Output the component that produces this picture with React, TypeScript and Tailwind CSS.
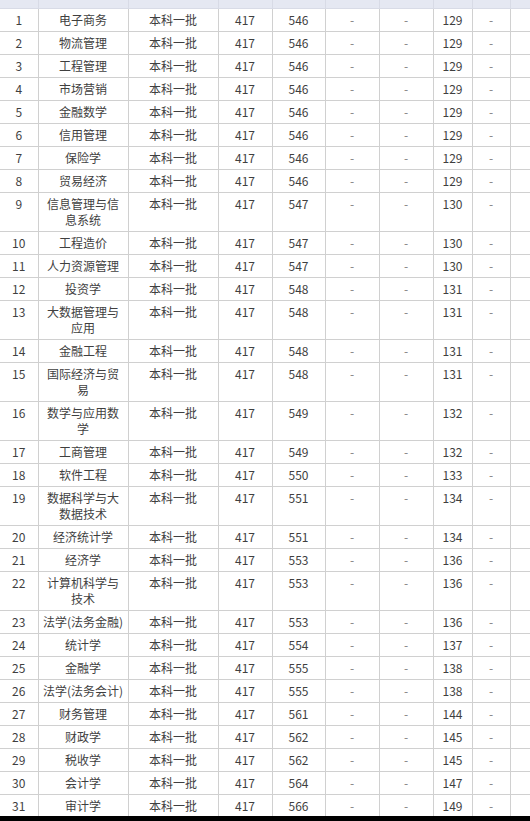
import React from 'react'

// 录取分数表（截图只露出表头底边）
type Row = [number, string, number, number]

const ROWS: Row[] = [
  [1, '电子商务', 546, 129],
  [2, '物流管理', 546, 129],
  [3, '工程管理', 546, 129],
  [4, '市场营销', 546, 129],
  [5, '金融数学', 546, 129],
  [6, '信用管理', 546, 129],
  [7, '保险学', 546, 129],
  [8, '贸易经济', 546, 129],
  [9, '信息管理与信息系统', 547, 130],
  [10, '工程造价', 547, 130],
  [11, '人力资源管理', 547, 130],
  [12, '投资学', 548, 131],
  [13, '大数据管理与应用', 548, 131],
  [14, '金融工程', 548, 131],
  [15, '国际经济与贸易', 548, 131],
  [16, '数学与应用数学', 549, 132],
  [17, '工商管理', 549, 132],
  [18, '软件工程', 550, 133],
  [19, '数据科学与大数据技术', 551, 134],
  [20, '经济统计学', 551, 134],
  [21, '经济学', 553, 136],
  [22, '计算机科学与技术', 553, 136],
  [23, '法学(法务金融)', 553, 136],
  [24, '统计学', 554, 137],
  [25, '金融学', 555, 138],
  [26, '法学(法务会计)', 555, 138],
  [27, '财务管理', 561, 144],
  [28, '财政学', 562, 145],
  [29, '税收学', 562, 145],
  [30, '会计学', 564, 147],
  [31, '审计学', 566, 149],
]

const WIDTHS = [38, 90, 90, 54, 53, 54, 54, 39, 38, 60]

const td = 'border border-[#d0d0d0] px-[4px] py-[3px] align-top text-center'
const first = td + ' border-l-0'
const dash = td + ' text-[#808080]'

export default function App() {
  return (
    <div className="h-[821px] w-[530px] overflow-hidden bg-black">
      <div className="h-[816px] overflow-hidden bg-white">
        <table
          className="table-fixed border-collapse text-[12px] leading-[16px] text-[#3f3f3f]"
          style={{ width: WIDTHS.reduce((a, b) => a + b, 0), fontFamily: '"Noto Sans CJK SC", "Noto Sans", sans-serif' }}
        >
          <colgroup>
            {WIDTHS.map((w, i) => (
              <col key={i} style={{ width: w }} />
            ))}
          </colgroup>
          <thead>
            <tr className="h-[8px] bg-[#e5e8f2]">
              {WIDTHS.map((_, i) => (
                <th key={i} className={'border-x border-b border-[#d8dbe6] p-0' + (i === 0 ? ' border-l-0' : '')} />
              ))}
            </tr>
          </thead>
          <tbody>
            {ROWS.map(([n, name, score, rank]) => (
              <tr key={n}>
                <td className={first}>{n}</td>
                <td className={td}>{name}</td>
                <td className={td}>本科一批</td>
                <td className={td}>417</td>
                <td className={td}>{score}</td>
                <td className={dash}>-</td>
                <td className={dash}>-</td>
                <td className={td}>{rank}</td>
                <td className={dash}>-</td>
                <td className={td}></td>
              </tr>
            ))}
          </tbody>
        </table>
      </div>
    </div>
  )
}
